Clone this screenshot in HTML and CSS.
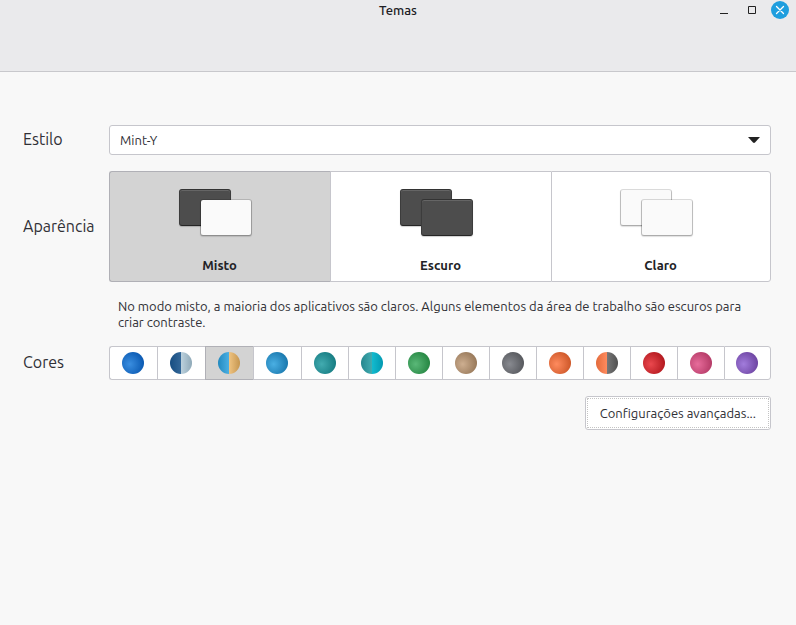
FILE: index.html
```
<!DOCTYPE html>
<html lang="pt">
<head>
<meta charset="utf-8">
<title>Temas</title>
<link rel="stylesheet" href="styles.css">
</head>
<body>
<header class="titlebar">
  <h1 class="title">Temas</h1>
  <div class="window-controls">
    <button class="win-btn" type="button" aria-label="Minimizar"><svg viewBox="0 0 18 18"><path d="M5 12.5h8" stroke="#222" fill="none"/></svg></button>
    <button class="win-btn" type="button" aria-label="Maximizar"><svg viewBox="0 0 18 18"><path d="M5.500 5.500h7v7h-7z" stroke="#222" fill="none"/></svg></button>
    <button class="win-btn win-close" type="button" aria-label="Fechar"><svg viewBox="0 0 18 18"><path d="M5.500 5.500l7 7M12.500 5.500l-7 7" stroke="#fff" stroke-width="1.300" stroke-linecap="round" fill="none"/></svg></button>
  </div>
</header>
<main class="settings">
  <label class="label" for="style">Estilo</label>
  <div class="select-wrap">
    <select class="select" id="style"><option>Mint-Y</option></select>
    <svg class="arrow" viewBox="0 0 12 6"><path d="M0 0h12L7 5.500Q6 6.300 5 5.500z" fill="#222"/></svg>
  </div>

  <span class="label" id="appearance">Aparência</span>
  <div class="segments modes" role="group" aria-labelledby="appearance">
    <button class="segment mode" type="button" aria-pressed="true">
      <span class="preview"><span class="pane dark"></span><span class="pane front light"></span></span>
      <span class="mode-name">Misto</span>
    </button>
    <button class="segment mode" type="button" aria-pressed="false">
      <span class="preview"><span class="pane dark"></span><span class="pane front dark"></span></span>
      <span class="mode-name">Escuro</span>
    </button>
    <button class="segment mode" type="button" aria-pressed="false">
      <span class="preview"><span class="pane light"></span><span class="pane front light"></span></span>
      <span class="mode-name">Claro</span>
    </button>
  </div>

  <p class="hint">No modo misto, a maioria dos aplicativos são claros. Alguns elementos da área de trabalho são escuros para criar contraste.</p>

  <span class="label" id="colors">Cores</span>
  <div class="segments colors" role="group" aria-labelledby="colors">
    <button class="segment" type="button" aria-pressed="false" aria-label="Azul"><span class="dot blue"></span></button>
    <button class="segment" type="button" aria-pressed="false" aria-label="Azul e cinza"><span class="dot navy-mist"></span></button>
    <button class="segment" type="button" aria-pressed="true" aria-label="Azul e areia"><span class="dot sky-sand"></span></button>
    <button class="segment" type="button" aria-pressed="false" aria-label="Azul claro"><span class="dot sky"></span></button>
    <button class="segment" type="button" aria-pressed="false" aria-label="Verde-azulado"><span class="dot teal"></span></button>
    <button class="segment" type="button" aria-pressed="false" aria-label="Verde-azulado e ciano"><span class="dot teal-cyan"></span></button>
    <button class="segment" type="button" aria-pressed="false" aria-label="Verde"><span class="dot green"></span></button>
    <button class="segment" type="button" aria-pressed="false" aria-label="Areia"><span class="dot sand"></span></button>
    <button class="segment" type="button" aria-pressed="false" aria-label="Cinza"><span class="dot grey"></span></button>
    <button class="segment" type="button" aria-pressed="false" aria-label="Laranja"><span class="dot orange"></span></button>
    <button class="segment" type="button" aria-pressed="false" aria-label="Laranja e cinza"><span class="dot orange-grey"></span></button>
    <button class="segment" type="button" aria-pressed="false" aria-label="Vermelho"><span class="dot red"></span></button>
    <button class="segment" type="button" aria-pressed="false" aria-label="Rosa"><span class="dot pink"></span></button>
    <button class="segment" type="button" aria-pressed="false" aria-label="Roxo"><span class="dot purple"></span></button>
  </div>

  <button class="advanced" type="button"><span class="focus-ring">Configurações avançadas...</span></button>
</main>
</body>
</html>
```
FILE: styles.css
```
* { box-sizing: border-box; }

body {
  margin: 0;
  background: #f8f8f8;
  color: #303036;
  font: 13px/16px Ubuntu, "Noto Sans", sans-serif;
}

button, select { font: inherit; color: inherit; }

.titlebar {
  display: grid;
  grid-template-columns: 1fr auto 1fr;
  align-items: start;
  height: 72px;
  padding: 1px 7px;
  background: #eaeaec;
  border-bottom: 1px solid #c8c8cc;
}

.title {
  grid-column: 2;
  margin: 0;
  padding-top: 1px;
  font-size: 13px;
  font-weight: 500;
  color: #202024;
}

.window-controls {
  display: flex;
  justify-content: flex-end;
  gap: 10px;
}

.win-btn {
  width: 18px;
  height: 18px;
  padding: 0;
  border: 0;
  border-radius: 50%;
  background: none;
}

.win-btn svg { display: block; }
.win-close { background: #1f9ede; }

.settings {
  display: grid;
  grid-template-columns: 70px 1fr;
  gap: 16px;
  align-items: center;
  padding: 53px 25px 24px 23px;
}

.label {
  padding-bottom: 2px;
  font-size: 16px;
  line-height: 20px;
}

.select-wrap { position: relative; }

.select {
  display: block;
  appearance: none;
  width: 100%;
  height: 30px;
  padding: 0 10px;
  background: #fff;
  border: 1px solid #c6c6cc;
  border-radius: 3px;
}

.arrow {
  position: absolute;
  right: 11px;
  top: 12px;
  width: 12px;
  height: 6px;
  pointer-events: none;
}

.segments { display: grid; }
.modes { grid-template-columns: 221fr 221fr 220fr; }
.colors { grid-template-columns: repeat(4, 48fr) repeat(10, 47fr); }

.segment {
  display: flex;
  align-items: center;
  justify-content: center;
  min-width: 0;
  height: 34px;
  padding: 0 1px 0 0;
  background: #fff;
  border: 1px solid #c6c6cc;
  border-right-width: 0;
}

.segment:first-child { border-radius: 3px 0 0 3px; }
.segment:last-child { border-right-width: 1px; border-radius: 0 3px 3px 0; }
.segment[aria-pressed="true"] { background: #d3d3d3; border-color: #b0b0b6; }

.mode {
  flex-direction: column;
  justify-content: flex-end;
  gap: 21px;
  height: 111px;
  padding-bottom: 8px;
}

.preview {
  display: grid;
  grid-template-columns: 21px 31px 21px;
  grid-template-rows: 10px 27px 10px;
  padding-right: 8px;
}

.pane {
  grid-area: 1 / 1 / 3 / 3;
  border: 1px solid;
  border-radius: 3px;
}

.front { grid-area: 2 / 2 / 4 / 4; }

.dark {
  background: #4d4d4d;
  border-color: #333 #3c3c3c #252525;
  box-shadow: inset 0 1px #656565, 0 1px 1px #00000030;
}

.light {
  background: #fafafa padding-box;
  border-color: #00000022 #0000002a #0000003a;
  box-shadow: 0 1px 1px #00000020;
}

.mode-name { font-weight: 600; color: #222226; }

.hint {
  grid-column: 2;
  margin: 0;
  padding: 0 8px 0 9px;
}

.dot {
  width: 22px;
  height: 22px;
  border-radius: 50%;
  background: radial-gradient(circle at 35% 55%, var(--light), var(--dark) 80%);
}

.blue { --light: #3a8ee0; --dark: #0857b0; }
.sky { --light: #4aafe3; --dark: #1775ab; }
.teal { --light: #42abb0; --dark: #147a80; }
.green { --light: #5ab878; --dark: #238440; }
.sand { --light: #cdae90; --dark: #957657; }
.grey { --light: #888a90; --dark: #54565b; }
.orange { --light: #ff8b5e; --dark: #cb5526; }
.red { --light: #ea484e; --dark: #b0161c; }
.pink { --light: #e76c9b; --dark: #b23864; }
.purple { --light: #a27cdc; --dark: #6b429f; }

.navy-mist { background: linear-gradient(90deg, #174e82, #336798 50%, #bcd1dd 50%, #8fa9b8); }
.sky-sand { background: linear-gradient(90deg, #238abf, #4aafe3 50%, #efc381 50%, #c59650); }
.teal-cyan { background: linear-gradient(90deg, #24878e, #42abb0 50%, #13bbcf 50%, #0299b1); }
.orange-grey { background: linear-gradient(90deg, #e36b3c, #ff8b5e 50%, #777 50%, #505050); }

.advanced {
  grid-column: 2;
  justify-self: end;
  height: 34px;
  padding: 1px;
  background: #fff;
  border: 1px solid #c6c6cc;
  border-radius: 3px;
}

.focus-ring {
  display: flex;
  align-items: center;
  height: 100%;
  padding: 0 12px;
  border: 1px dotted #c4c4c4;
  border-radius: 1px;
}
```
